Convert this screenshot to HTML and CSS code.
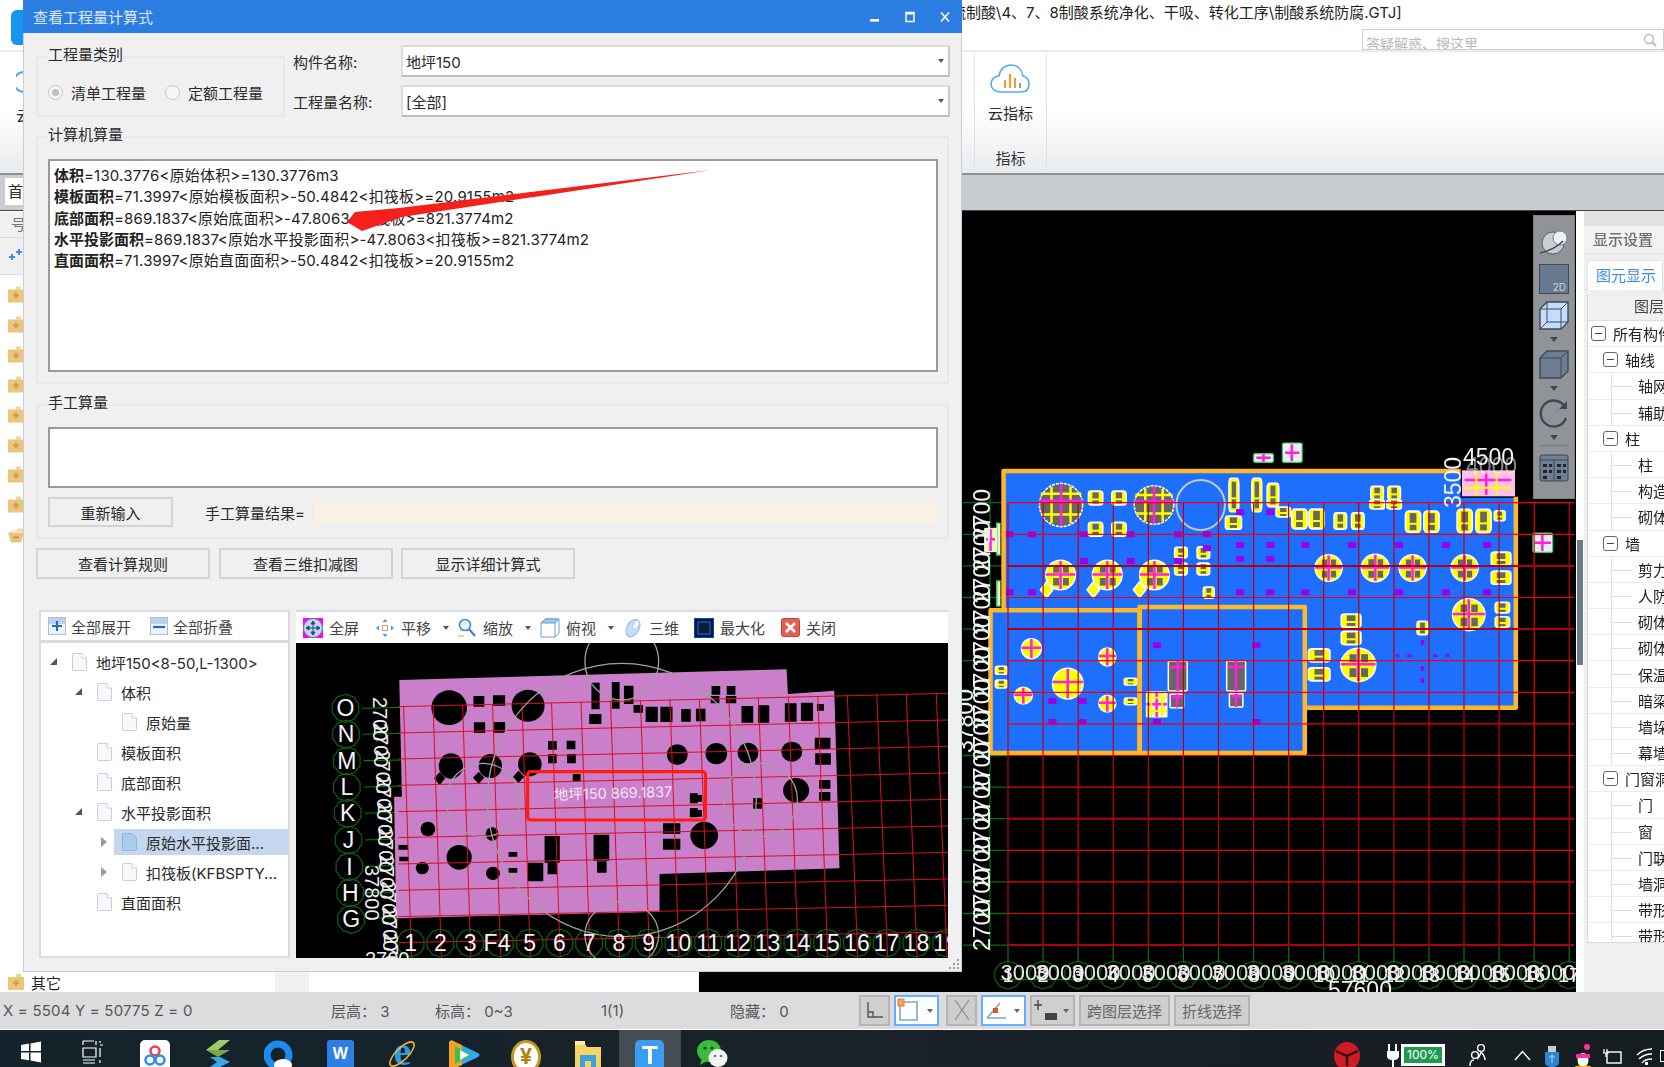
FILE: index.html
```html
<!DOCTYPE html>
<html lang="zh-CN">
<head>
<meta charset="utf-8">
<title>查看工程量计算式</title>
<link rel="stylesheet" href="styles.css">
</head>
<body>
<div class="app">
  <div class="topbar">
    <div class="app-logo"></div>
    <div class="doc-title">硫制酸\4、7、8制酸系统净化、干吸、转化工序\制酸系统防腐.GTJ]</div>
    <div class="search"><span>答疑解惑、搜这里</span>
      <svg class="search-ic" width="14" height="14" viewBox="0 0 14 14"><circle cx="6" cy="6" r="4.5" fill="none" stroke="#bbb" stroke-width="1.5"/><path d="M9.5 9.5L13 13" stroke="#bbb" stroke-width="2"/></svg>
    </div>
  </div>
  <div class="ribbon">
    <div class="rib-left"><svg width="8" height="22" viewBox="0 0 8 22"><path d="M8 1A10 10 0 0 0 8 21" fill="none" stroke="#58a6ee" stroke-width="2"/></svg><span class="rib-frag">云</span></div>
    <div class="rib-group">
      <div class="rib-tool">
        <svg width="40" height="30" viewBox="0 0 40 30"><path d="M11 28C4 28 1 24 1 20c0-5 4-8 8-8C10 5 15 1 21 1c7 0 11 5 12 11 4 1 6 4 6 8 0 5-3 8-8 8z" fill="#fff" stroke="#5aa8ee" stroke-width="1.6"/><path d="M15 24v-8M20 24V10M25 24v-10" stroke="#f79a3a" stroke-width="2.2"/><path d="M30 24v-5" stroke="#5aa8ee" stroke-width="2"/></svg>
        <span>云指标</span>
      </div>
      <div class="rib-name">指标</div>
    </div>
  </div>
  <div class="band"><div class="first-tab">首</div></div>
  <div class="main">
    <div class="nav">
      <div class="nav-head">号</div>
      <div class="nav-tools"><svg width="16" height="14" viewBox="0 0 16 14"><path d="M2 8h2V6h2v2h2v2H6v2H4v-2H2z" fill="#3f8fe0"/><path d="M9 3h2V1h2v2h2v2h-2v2h-2V5H9z" fill="#3f8fe0"/></svg></div>
      <div class="nav-list">
        <svg class="fold" width="17" height="17" viewBox="0 0 17 17"><use href="#folder"/></svg>
        <svg class="fold" width="17" height="17" viewBox="0 0 17 17"><use href="#folder"/></svg>
        <svg class="fold" width="17" height="17" viewBox="0 0 17 17"><use href="#folder"/></svg>
        <svg class="fold" width="17" height="17" viewBox="0 0 17 17"><use href="#folder"/></svg>
        <svg class="fold" width="17" height="17" viewBox="0 0 17 17"><use href="#folder"/></svg>
        <svg class="fold" width="17" height="17" viewBox="0 0 17 17"><use href="#folder"/></svg>
        <svg class="fold" width="17" height="17" viewBox="0 0 17 17"><use href="#folder"/></svg>
        <svg class="fold" width="17" height="17" viewBox="0 0 17 17"><use href="#folder"/></svg>
        <svg class="fold" width="17" height="17" viewBox="0 0 17 17"><path d="M3 4h6l1-2h5v3H3z" fill="#f1d39a"/><path d="M0 6h16l-3 10H3z" fill="#ecc47a"/><path d="M5 10h6v1.6H5z" fill="#b9924f"/></svg>
        <div class="nav-last"><svg width="17" height="17" viewBox="0 0 17 17"><use href="#folder"/></svg><span>其它</span></div>
      </div>
    </div>
    <div class="mid"><div class="mid-strip"></div><div class="mid-page"></div></div>
    <div class="canvas">
      <svg class="cad" width="877" height="782" viewBox="699 210 877 782">
        <defs class="ns">
          <g id="folder"><path d="M8 0h5v3H8z" fill="#f1d39a"/><path d="M0 3h16v13H0z" fill="#ecc47a"/><path d="M7 6h2v2h2v2H9v2H7v-2H5V8h2z" fill="#c59f56"/></g>
          <polygon id="dec" points="0,-14 8.2,-11.3 13.3,-4.3 13.3,4.3 8.2,11.3 0,14 -8.2,11.3 -13.3,4.3 -13.3,-4.3 -8.2,-11.3"/>
          <text id="d27" class="dim27" transform="rotate(-90)">2700</text>
          <text id="d27r" class="dim27m" transform="rotate(90)">2700</text>
          <text id="d30" class="dim30" text-anchor="middle">3000</text>
          <g id="cg"><ellipse rx="50" ry="50" class="c-grey"/><path d="M-22-42V42M22-42V42M-45 22H45M-47-26H47" class="y-line"/><path d="M0-48V48M-50-10H50" class="m-line"/></g>
          <g id="cy"><ellipse rx="50" ry="50" class="c-yel"/><path d="M-25-32h20v24h-20zM8-32h20v24H8zM-25 10h20v26h-20zM8 10h20v26H8z" class="grey-f"/><path d="M0-48V48M-50 -2H50" class="m-line"/></g>
          <g id="cs"><ellipse rx="50" ry="50" class="c-yel"/><path d="M0-48V48M-50-5H50" class="m-line"/></g>
          <g id="rr"><rect x="-50" y="-50" width="100" height="100" rx="20" class="c-yel"/><rect x="-22" y="-40" width="44" height="80" class="grey-f"/><path d="M-45 10H45" class="y-thin"/></g>
          <g id="tt"><rect x="-50" y="-50" width="100" height="100" rx="5" class="c-tall"/><path d="M0-50V50M-45-30H45" class="m-line"/></g>
          <path id="dia" d="M0-24L14 0 0 24-14 0z" class="c-yel"/>
        </defs>
        <rect x="699" y="210" width="877" height="782" class="black"/>
        <path d="M990 490V950" class="gdim"/>
        <path d="M963 501.7H1008M963 533.3H1008M963 564.9H1008M963 596.5H1008M963 628.1H1008M963 659.7H1008M963 691.3H1008M963 722.9H1008M963 754.5H1008M963 786.1H1008M963 817.7H1008M963 849.3H1008M963 880.9H1008M963 912.5H1008M963 944.1H1008" class="gdim"/>
        <path d="M1008 944V962M1043.1 944V962M1078.2 944V962M1113.2 944V962M1148.3 944V962M1183.4 944V962M1218.5 944V962M1253.6 944V962M1288.6 944V962M1323.7 944V962M1358.8 944V962M1393.9 944V962M1429 944V962M1464 944V962M1499.1 944V962M1534.2 944V962M1569.3 944V962M1000 978.5H1576" class="gdim"/>
        <g transform="translate(960,430) scale(.449,.3333)" class="ns">
          <path d="M97 540V120H1115V200H1238V830H770V530H400V540Z" class="blue"/>
          <rect x="68" y="538" width="332" height="428" class="blue"/>
          <rect x="400" y="528" width="368" height="438" class="blue"/>
          <rect x="1118" y="118" width="118" height="78" class="pink"/>
          <path d="M1124 147H1228M1172 122V192" class="m-line"/><path d="M1124 170H1228M1150 122V192M1195 122V192" class="y-thin"/>
          <use href="#cg" transform="translate(225,222) scale(.96,1.3)"/>
          <use href="#cg" transform="translate(432,222) scale(.88,1.16)"/>
          <ellipse cx="536" cy="222" rx="54" ry="75" class="ring"/>
          <use href="#cy" transform="translate(224,432) scale(.66,.88)"/><use href="#cy" transform="translate(328,432) scale(.66,.88)"/><use href="#cy" transform="translate(433,432) scale(.66,.88)"/>
          <use href="#cy" transform="translate(821,411) scale(.6,.8)"/><use href="#cy" transform="translate(925,411) scale(.62,.82)"/><use href="#cy" transform="translate(1008,411) scale(.6,.8)"/><use href="#cy" transform="translate(1124,411) scale(.6,.8)"/>
          <use href="#cy" transform="translate(1133,551) scale(.72,.96)"/><use href="#cy" transform="translate(887,702) scale(.78,1)"/>
          <use href="#cs" transform="translate(159,653) scale(.44,.6)"/><use href="#cs" transform="translate(328,678) scale(.38,.54)"/><use href="#cs" transform="translate(240,758) scale(.68,.92)"/><use href="#cs" transform="translate(141,794) scale(.4,.5)"/><use href="#cs" transform="translate(328,818) scale(.38,.5)"/>
          <use href="#rr" transform="translate(302,201) scale(.32,.42)"/><use href="#rr" transform="translate(354,201) scale(.32,.42)"/><use href="#rr" transform="translate(302,295) scale(.32,.42)"/><use href="#rr" transform="translate(354,295) scale(.32,.42)"/>
          <use href="#rr" transform="translate(610,192) scale(.22,1)"/><use href="#rr" transform="translate(661,192) scale(.22,1)"/><use href="#rr" transform="translate(697,192) scale(.26,.7)"/><use href="#rr" transform="translate(609,275) scale(.36,.4)"/><use href="#rr" transform="translate(720,243) scale(.32,.3)"/>
          <use href="#rr" transform="translate(756,264) scale(.34,.6)"/><use href="#rr" transform="translate(794,264) scale(.34,.6)"/><use href="#rr" transform="translate(847,270) scale(.28,.5)"/><use href="#rr" transform="translate(886,270) scale(.28,.5)"/>
          <use href="#rr" transform="translate(1009,272) scale(.34,.64)"/><use href="#rr" transform="translate(1050,272) scale(.34,.64)"/><use href="#rr" transform="translate(1124,270) scale(.34,.7)"/><use href="#rr" transform="translate(1166,270) scale(.34,.7)"/><use href="#rr" transform="translate(1202,254) scale(.24,.3)"/>
          <use href="#rr" transform="translate(929,186) scale(.28,.4)"/><use href="#rr" transform="translate(967,186) scale(.28,.4)"/><use href="#rr" transform="translate(929,220) scale(.32,.28)"/><use href="#rr" transform="translate(967,220) scale(.32,.28)"/>
          <use href="#rr" transform="translate(492,365) scale(.28,.32)"/><use href="#rr" transform="translate(542,365) scale(.28,.36)"/><use href="#rr" transform="translate(492,414) scale(.28,.36)"/><use href="#rr" transform="translate(542,414) scale(.28,.36)"/><use href="#rr" transform="translate(554,485) scale(.24,.34)"/>
          <use href="#rr" transform="translate(1205,383) scale(.44,.4)"/><use href="#rr" transform="translate(1205,440) scale(.44,.4)"/><use href="#rr" transform="translate(1208,530) scale(.32,.32)"/><use href="#rr" transform="translate(1208,573) scale(.32,.32)"/>
          <use href="#rr" transform="translate(871,569) scale(.44,.4)"/><use href="#rr" transform="translate(871,621) scale(.44,.4)"/><use href="#rr" transform="translate(800,673) scale(.48,.4)"/><use href="#rr" transform="translate(800,730) scale(.48,.4)"/><use href="#rr" transform="translate(1030,591) scale(.24,.4)"/>
          <use href="#rr" transform="translate(92,718) scale(.26,.24)"/><use href="#rr" transform="translate(92,759) scale(.26,.24)"/><use href="#rr" transform="translate(380,752) scale(.28,.2)"/><use href="#rr" transform="translate(380,811) scale(.28,.2)"/>
          <use href="#dia" transform="translate(193,476)"/><use href="#dia" transform="translate(297,476)"/><use href="#dia" transform="translate(400,476)"/>
          <use href="#tt" transform="translate(485,735) scale(.42,.9)"/><use href="#tt" transform="translate(615,735) scale(.42,.9)"/><use href="#tt" transform="translate(483,810) scale(.3,.4)"/><use href="#tt" transform="translate(615,808) scale(.3,.4)"/>
          <rect x="415" y="782" width="46" height="76" class="tile"/><path d="M415 820H461M438 782V858" class="m-line"/><path d="M415 800H461M415 840H461M426 782V858M450 782V858" class="y-thin"/>
          <path d="M101 301h18v18h-18zM151 301h18v18h-18zM266 301h18v18h-18zM371 301h18v18h-18zM477 301h18v18h-18zM541 301h18v18h-18zM615 333h18v18h-18zM682 333h18v18h-18zM760 333h18v18h-18zM864 333h18v18h-18zM969 333h18v18h-18zM1073 333h18v18h-18zM1165 333h18v18h-18zM541 343h18v18h-18zM615 374h18v18h-18zM682 374h18v18h-18zM267 381h18v18h-18zM371 381h18v18h-18zM477 381h18v18h-18zM101 475h18v18h-18zM151 475h18v18h-18zM615 475h18v18h-18zM682 475h18v18h-18zM760 475h18v18h-18zM864 475h18v18h-18zM969 475h18v18h-18zM1073 475h18v18h-18zM1165 475h18v18h-18zM615 234h18v18h-18zM682 234h18v18h-18zM430 634h18v18h-18zM651 634h18v18h-18zM197 801h18v18h-18zM264 801h18v18h-18zM197 864h18v18h-18zM264 864h18v18h-18zM430 864h18v18h-18zM651 864h18v18h-18zM970 670h9v9h-9zM996 670h9v9h-9zM1054 670h9v9h-9zM1081 670h9v9h-9zM1026 627h8v14h-8zM1026 705h8v14h-8zM1026 741h8v14h-8z" class="purple"/>
          <path d="M97 540V120H1115M1238 197V830H770" class="orange"/>
          <rect x="68" y="538" width="332" height="428" class="orange"/>
          <rect x="400" y="528" width="368" height="438" class="orange"/>
          <rect x="654" y="68" width="44" height="26" rx="4" class="item"/><path d="M660 80H692M676 70V92" class="m-line"/>
          <rect x="718" y="36" width="44" height="58" rx="4" class="item"/><path d="M724 65H756M739 40V90" class="m-line"/>
          <rect x="1276" y="306" width="44" height="58" rx="4" class="item"/><path d="M1280 335H1316M1297 310V360" class="m-line"/>
          <path d="M90 277H82V372H90M90 450H82V525H90" class="gbr"/>
          <rect x="55" y="292" width="26" height="70" class="tile"/><path d="M58 325H78M68 295V360" class="m-line"/>
        </g>
        <path d="M1008 501.7V944M1043.1 501.7V944M1078.2 501.7V944M1113.2 501.7V944M1148.3 501.7V944M1183.4 501.7V944M1218.5 501.7V944M1253.6 501.7V944M1288.6 501.7V944M1323.7 501.7V944M1358.8 501.7V944M1393.9 501.7V944M1429 501.7V944M1464 501.7V944M1499.1 501.7V944M1569.3 501.7V944" class="grid-v"/>
        <path d="M1534.2 501.7V944" class="grid-h"/>
        <path d="M1008 501.7H1574M1008 533.3H1574M1008 596.5H1574M1008 659.7H1574M1008 691.3H1574M1008 722.9H1574M1008 754.5H1574M1008 786.1H1574M1008 849.3H1574M1008 880.9H1574M1008 912.5H1574" class="grid-h"/>
        <path d="M1008 564.9H1574M1008 628.1H1574M1008 817.7H1574M1008 944.1H1574" class="grid-d"/>
        <g class="green-dec">
          <use href="#dec" x="1008" y="974"/><use href="#dec" x="1043.1" y="974"/><use href="#dec" x="1078.2" y="974"/><use href="#dec" x="1113.2" y="974"/><use href="#dec" x="1148.3" y="974"/><use href="#dec" x="1183.4" y="974"/><use href="#dec" x="1218.5" y="974"/><use href="#dec" x="1253.6" y="974"/><use href="#dec" x="1288.6" y="974"/><use href="#dec" x="1323.7" y="974"/><use href="#dec" x="1358.8" y="974"/><use href="#dec" x="1393.9" y="974"/><use href="#dec" x="1429" y="974"/><use href="#dec" x="1464" y="974"/><use href="#dec" x="1499.1" y="974"/><use href="#dec" x="1534.2" y="974"/><use href="#dec" x="1569.3" y="974"/>
        </g>
        <use href="#d30" x="1025" y="979"/><use href="#d30" x="1060" y="979"/><use href="#d30" x="1096" y="979"/><use href="#d30" x="1131" y="979"/><use href="#d30" x="1166" y="979"/><use href="#d30" x="1201" y="979"/><use href="#d30" x="1236" y="979"/><use href="#d30" x="1271" y="979"/><use href="#d30" x="1306" y="979"/><use href="#d30" x="1341" y="979"/><use href="#d30" x="1376" y="979"/><use href="#d30" x="1411" y="979"/><use href="#d30" x="1446" y="979"/><use href="#d30" x="1481" y="979"/><use href="#d30" x="1516" y="979"/><use href="#d30" x="1551" y="979"/>
        <g class="axis-b"><text x="1008" y="981">1</text><text x="1043" y="981">2</text><text x="1078" y="981">3</text><text x="1113" y="981">4</text><text x="1148" y="981">5</text><text x="1183" y="981">6</text><text x="1218" y="981">7</text><text x="1254" y="981">8</text><text x="1289" y="981">9</text><text x="1324" y="981">10</text><text x="1359" y="981">11</text><text x="1394" y="981">12</text><text x="1429" y="981">13</text><text x="1464" y="981">14</text><text x="1499" y="981">15</text><text x="1534" y="981">16</text><text x="1569" y="981">17</text></g>
        <use href="#d27" transform="translate(990,950)"/><use href="#d27" transform="translate(990,918.4)"/><use href="#d27" transform="translate(990,886.8)"/><use href="#d27" transform="translate(990,855.2)"/><use href="#d27" transform="translate(990,823.6)"/><use href="#d27" transform="translate(990,792)"/><use href="#d27" transform="translate(990,760.4)"/><use href="#d27" transform="translate(990,728.8)"/><use href="#d27" transform="translate(990,697.2)"/><use href="#d27" transform="translate(990,665.6)"/><use href="#d27" transform="translate(990,634)"/><use href="#d27" transform="translate(990,602.4)"/><use href="#d27" transform="translate(990,570.8)"/><use href="#d27" transform="translate(990,539.2)"/>
        <text class="dim27" transform="translate(973,752) rotate(-90)">37800</text>
        <text class="dim27" x="1328" y="997">57600</text>
        <text class="dim27" x="1463" y="464">4500</text>
        <text class="dim27 faint" x="1466" y="473">4000</text>
        <text class="dim27" transform="translate(1461,507) rotate(-90)">3500</text>
      </svg>
      <div class="nav3d">
        <svg width="30" height="26" viewBox="0 0 30 26"><ellipse cx="14" cy="14" rx="11" ry="11" fill="#c8ced4" stroke="#57606a"/><ellipse cx="21" cy="9" rx="7" ry="7" fill="#eef1f4" stroke="#7c848c"/><path d="M1 24C8 23 18 18 24 12" stroke="#3e4650" stroke-width="1.5" fill="none"/></svg>
        <div class="b2d">2D</div>
        <svg class="cube" width="30" height="29" viewBox="0 0 30 29"><path d="M1 8L8 1H29V21L22 28H1z" fill="#c4ddff" stroke="#3d4955" stroke-width="1.4"/><path d="M8 1V21H29M8 21L1 28M1 8H22V28M22 8L29 1" fill="none" stroke="#3d4955" stroke-width="1"/></svg>
        <span class="car"></span>
        <svg class="cube" width="30" height="29" viewBox="0 0 30 29"><path d="M1 8L8 1H29V21L22 28H1z" fill="#6e7e92" stroke="#3d4955" stroke-width="1.4"/><path d="M1 8H22V28M22 8L29 1" fill="none" stroke="#3d4955" stroke-width="1"/></svg>
        <span class="car"></span>
        <svg class="cube" width="30" height="29" viewBox="0 0 30 29"><path d="M26 8A13 13 0 1 0 27 19" fill="none" stroke="#3d4955" stroke-width="2.4"/><path d="M28 2V10H20z" fill="#3d4955"/></svg>
        <span class="car"></span>
        <div class="nav3d-sep"></div>
        <svg width="30" height="30" viewBox="0 0 30 30"><rect x="1" y="3" width="28" height="26" rx="2" fill="#6f7e90" stroke="#3d4955"/><path d="M1 8H29M15 8V29" stroke="#3d4955"/><path d="M4 12h4v3H4zM4 18h4v3H4zM4 24h4v3H4zM10 12h3v3h-3zM10 18h3v3h-3zM18 12h4v3h-4zM18 18h4v3h-4zM18 24h4v3h-4zM24 12h3v3h-3zM24 18h3v3h-3z" fill="#1d2530"/></svg>
      </div>
    </div>
    <div class="gutter"><div class="split"></div></div>
    <aside class="props">
      <div class="props-top"></div>
      <div class="props-title">显示设置</div>
      <div class="props-tabs"><div class="props-tab">图元显示</div></div>
      <div class="tbl">
        <div class="tbl-head">图层</div>
        <div class="lr l1"><i class="mn"></i>所有构件</div>
        <div class="lr l2"><i class="mn"></i>轴线</div>
        <div class="lr l3">轴网</div>
        <div class="lr l3">辅助轴线</div>
        <div class="lr l2"><i class="mn"></i>柱</div>
        <div class="lr l3">柱</div>
        <div class="lr l3">构造柱</div>
        <div class="lr l3">砌体柱</div>
        <div class="lr l2"><i class="mn"></i>墙</div>
        <div class="lr l3">剪力墙</div>
        <div class="lr l3">人防门框墙</div>
        <div class="lr l3">砌体墙</div>
        <div class="lr l3">砌体加筋</div>
        <div class="lr l3">保温层</div>
        <div class="lr l3">暗梁</div>
        <div class="lr l3">墙垛</div>
        <div class="lr l3">幕墙</div>
        <div class="lr l2"><i class="mn"></i>门窗洞</div>
        <div class="lr l3">门</div>
        <div class="lr l3">窗</div>
        <div class="lr l3">门联窗</div>
        <div class="lr l3">墙洞</div>
        <div class="lr l3">带形窗</div>
        <div class="lr l3">带形洞</div>
      </div>
    </aside>
  </div>
  <footer class="status">
    <span class="st-xyz">X = 5504 Y = 50775 Z = 0</span>
    <span class="st-a">层高：&nbsp;3</span>
    <span class="st-b">标高：&nbsp;0~3</span>
    <span class="st-c">1(1)</span>
    <span class="st-d">隐藏：&nbsp;0</span>
    <div class="st-tools">
      <div class="sb s1"><svg width="20" height="20" viewBox="0 0 20 20"><path d="M3 2V17H18M3 12H8V17" fill="none" stroke="#555" stroke-width="1.4"/></svg></div>
      <div class="sb on s2"><svg width="24" height="24" viewBox="0 0 24 24"><path d="M3 4H20V22H3z" fill="none" stroke="#7ba6cf" stroke-width="1.6"/><rect x="1" y="1" width="6" height="7" fill="#f7a35c" stroke="#e07b2c"/></svg><i class="sc"></i></div>
      <div class="sb dis s3"><svg width="20" height="24" viewBox="0 0 20 24"><path d="M3 2L17 22M17 2L3 22" stroke="#8b8b8b" stroke-width="1.2"/></svg></div>
      <div class="sb on s2"><svg width="24" height="24" viewBox="0 0 24 24"><path d="M3 20H22M3 20L16 5" fill="none" stroke="#7ba6cf" stroke-width="1.6"/><rect x="9" y="10" width="5" height="5" fill="#e8541e"/></svg><i class="sc"></i></div>
      <div class="sb s2"><svg width="24" height="24" viewBox="0 0 24 24"><path d="M5 2V12M1 7H9" stroke="#444" stroke-width="1.4"/><rect x="12" y="15" width="12" height="7" fill="#444"/></svg><i class="sc"></i></div>
      <div class="sb s6">跨图层选择</div>
      <div class="sb s7">折线选择</div>
    </div>
  </footer>
  <div class="taskbar">
    <div class="tslot"><svg width="22" height="24" viewBox="0 0 22 24"><path d="M1 5L9 3.6V11H1zM10.5 3.4L21 1.6V11H10.5zM1 12.5H9v7.8L1 19zM10.5 12.5H21v10L10.5 20.6z" fill="#fff"/></svg></div>
    <div class="tslot"><svg width="22" height="24" viewBox="0 0 22 24"><path d="M1 1V5M1 1H12M14 1V5M18 5H21M18 1V3M1 8H14V17H1zM18 8V17M1 20H13M18 20V23M1 23H13" fill="none" stroke="#fff" stroke-width="1.2"/></svg></div>
    <div class="tslot"><svg width="30" height="27" viewBox="0 0 30 27"><rect width="30" height="34" rx="5" fill="#fff"/><circle cx="15" cy="11" r="4.5" fill="none" stroke="#e6434d" stroke-width="2.6"/><circle cx="10" cy="20" r="4.5" fill="none" stroke="#2b8ff0" stroke-width="2.6"/><circle cx="20" cy="20" r="4.5" fill="none" stroke="#2b8ff0" stroke-width="2.6"/></svg></div>
    <div class="tslot"><svg width="26" height="27" viewBox="0 0 26 27"><path d="M2 10L15 0H26L14 10z" fill="#9fca6b"/><path d="M2 10L14 10 26 10 14 17z" fill="#79a84c"/><path d="M6 17H16L26 22 16 27H6L13 22z" fill="#36a8e8"/></svg></div>
    <div class="tslot"><svg width="30" height="27" viewBox="0 0 30 27"><circle cx="14" cy="15" r="11" fill="none" stroke="#1d8cf0" stroke-width="7"/><ellipse cx="19" cy="25" rx="9" ry="6" fill="#fff"/></svg></div>
    <div class="tslot"><div class="t-wps">W</div></div>
    <div class="tslot t-ie"><span>e</span><svg class="t-orbit" width="28" height="27" viewBox="0 0 28 27"><ellipse cx="14" cy="14" rx="16" ry="6" transform="rotate(-45 14 14)" fill="none" stroke="#e9b93a" stroke-width="1.6"/></svg></div>
    <div class="tslot"><svg width="32" height="27" viewBox="0 0 32 27"><path d="M1 3C1 1 3 0 5 1L30 13C32 14 32 16 30 17L5 29C3 30 1 29 1 27z" fill="#34a8f2"/><path d="M1 3C1 1 3 0 5 1L14 5V25L5 29C3 30 1 29 1 27z" fill="#f6a21c"/><path d="M7 6L24 15 7 24z" fill="#3cc04a"/><path d="M12 10L21 15 12 20z" fill="#fff"/></svg></div>
    <div class="tslot"><div class="t-coin">¥</div></div>
    <div class="tslot"><svg width="28" height="27" viewBox="0 0 28 27"><path d="M1 4H11L13 7H27V27H1z" fill="#f6d365"/><path d="M1 1H11V5H1z" fill="#fdeaa8"/><rect x="6" y="15" width="16" height="12" fill="#3f9fe0"/><rect x="11" y="21" width="6" height="6" fill="#f6d365"/></svg></div>
    <div class="tslot sel"><div class="t-t">T</div></div>
    <div class="tslot"><svg width="32" height="27" viewBox="0 0 32 27"><ellipse cx="13" cy="11" rx="12" ry="11" fill="#3dbb3f"/><path d="M6 18L4 25 11 21z" fill="#3dbb3f"/><circle cx="9" cy="8" r="1.6" fill="#174a18"/><circle cx="16" cy="8" r="1.6" fill="#174a18"/><ellipse cx="22" cy="18" rx="9.5" ry="9" fill="#f4f4f4"/><circle cx="19" cy="16" r="1.3" fill="#777"/><circle cx="25" cy="16" r="1.3" fill="#777"/></svg></div>
    <div class="tray">
      <svg class="tr-lenovo" width="26" height="25" viewBox="0 0 26 25"><ellipse cx="13" cy="14" rx="13" ry="14" fill="#cf1b26"/><path d="M2 9L13 14 24 9M13 14V24" fill="none" stroke="#30060a" stroke-width="2.4"/></svg>
      <svg class="tr-plug" width="14" height="23" viewBox="0 0 14 23"><path d="M3 0V7M10 0V7" stroke="#fff" stroke-width="2"/><path d="M1 7H13V12C13 15 10 16 8 16V23H6V16C4 16 1 15 1 12z" fill="#fff"/></svg>
      <div class="tr-bat"><span>100%</span></div>
      <svg class="tr-person" width="18" height="24" viewBox="0 0 18 24"><circle cx="12" cy="5" r="3.4" fill="none" stroke="#fff" stroke-width="1.4"/><circle cx="6" cy="12" r="3.4" fill="none" stroke="#fff" stroke-width="1.4"/><path d="M1 23C1 19 3 17 5 17M8 16C10 15 11 12 12 9M12 9C14 11 16 13 16 17" fill="none" stroke="#fff" stroke-width="1.4"/></svg>
      <svg class="tr-chev" width="17" height="11" viewBox="0 0 17 11"><path d="M1 10L8.5 1.5 16 10" fill="none" stroke="#fff" stroke-width="1.4"/></svg>
      <svg class="tr-usb" width="16" height="21" viewBox="0 0 16 21"><rect x="4" y="0" width="8" height="6" fill="#c9cdd0"/><path d="M1 6H15V17C15 19 12 21 8 21S1 19 1 17z" fill="#2b86d8"/><path d="M8 9V17M5 12L8 9 11 12" stroke="#bde0ff" fill="none"/></svg>
      <svg class="tr-qq" width="18" height="24" viewBox="0 0 18 24"><ellipse cx="9" cy="13" rx="8" ry="11" fill="#1a1a1a"/><ellipse cx="9" cy="16" rx="5.5" ry="7" fill="#fff"/><rect x="2" y="10" width="14" height="4" fill="#ff2fa0"/><circle cx="13" cy="3" r="3" fill="#ff2fa0"/><ellipse cx="5" cy="23" rx="4" ry="1.5" fill="#f7b500"/><ellipse cx="13" cy="23" rx="4" ry="1.5" fill="#f7b500"/></svg>
      <svg class="tr-small" width="20" height="16" viewBox="0 0 20 16"><rect x="5" y="4" width="14" height="11" fill="none" stroke="#fff" stroke-width="1.4"/><path d="M1 5H7M2 1V5M5 1V5M4 5V9" stroke="#fff" stroke-width="1.2"/></svg>
      <svg class="tr-wifi" width="16" height="18" viewBox="0 0 16 18"><path d="M1 7C5 3 11 1 16 1M3 11C6 8 11 6 16 6M6 15C8 12 12 11 16 11" fill="none" stroke="#fff" stroke-width="1.3"/><rect x="9" y="14" width="3" height="3" fill="#fff"/></svg>
      <div class="tr-end"></div>
    </div>
  </div>
</div>

<section class="dlg">
  <header class="dlg-title"><span>查看工程量计算式</span>
    <div class="dlg-ctl">
      <svg width="12" height="12" viewBox="0 0 12 12"><rect x="1" y="8" width="9" height="2.6" fill="#fff"/></svg>
      <svg width="12" height="12" viewBox="0 0 12 12"><path d="M2 1.5H10V10.5H2z" fill="none" stroke="#fff" stroke-width="1.5"/><path d="M2 2.5H10" stroke="#fff" stroke-width="2"/></svg>
      <svg width="12" height="12" viewBox="0 0 12 12"><path d="M2 1.5L10 10.5M10 1.5L2 10.5" stroke="#fff" stroke-width="1.6"/></svg>
    </div>
  </header>
  <div class="dlg-body">
    <div class="top-row">
      <fieldset class="grp grp-type">
        <legend>工程量类别</legend>
        <div class="radios">
          <span class="radio on"></span><span class="rad-lab">清单工程量</span>
          <span class="radio"></span><span class="rad-lab">定额工程量</span>
        </div>
      </fieldset>
      <div class="combos">
        <div class="fld"><label>构件名称:</label><div class="combo">地坪150<i class="caret"></i></div></div>
        <div class="fld"><label>工程量名称:</label><div class="combo">[全部]<i class="caret"></i></div></div>
      </div>
    </div>
    <fieldset class="grp grp-calc">
      <legend>计算机算量</legend>
      <div class="formula">
        <p><b>体积</b>=130.3776&lt;原始体积&gt;=130.3776m3</p>
        <p><b>模板面积</b>=71.3997&lt;原始模板面积&gt;-50.4842&lt;扣筏板&gt;=20.9155m2</p>
        <p><b>底部面积</b>=869.1837&lt;原始底面积&gt;-47.8063&lt;扣筏板&gt;=821.3774m2</p>
        <p><b>水平投影面积</b>=869.1837&lt;原始水平投影面积&gt;-47.8063&lt;扣筏板&gt;=821.3774m2</p>
        <p><b>直面面积</b>=71.3997&lt;原始直面面积&gt;-50.4842&lt;扣筏板&gt;=20.9155m2</p>
      </div>
    </fieldset>
    <fieldset class="grp grp-man">
      <legend>手工算量</legend>
      <div class="man-box"></div>
      <div class="man-row">
        <div class="btn btn-re">重新输入</div>
        <span class="man-lab">手工算量结果=</span>
        <div class="man-res"></div>
      </div>
    </fieldset>
    <div class="btn-row">
      <div class="btn btn-w">查看计算规则</div>
      <div class="btn btn-w">查看三维扣减图</div>
      <div class="btn btn-w">显示详细计算式</div>
    </div>
    <div class="view-row">
      <div class="tree-pane">
        <div class="pane-tools">
          <div class="pt"><svg width="18" height="18" viewBox="0 0 18 18"><rect x=".5" y=".5" width="17" height="17" fill="#eef3fb" stroke="#a8c0e4"/><rect x="1" y="1" width="16" height="6" fill="#bdd0ee"/><path d="M9 4V14M4 9H14" stroke="#1c6fc4" stroke-width="2.2"/></svg><span>全部展开</span></div>
          <div class="pt"><svg width="18" height="18" viewBox="0 0 18 18"><rect x=".5" y=".5" width="17" height="17" fill="#eef3fb" stroke="#a8c0e4"/><rect x="1" y="1" width="16" height="6" fill="#bdd0ee"/><path d="M3 10H15" stroke="#1c6fc4" stroke-width="2.2"/></svg><span>全部折叠</span></div>
        </div>
        <div class="tree">
          <div class="tr t0"><i class="arr down"></i><div class="node"><svg width="15" height="18" viewBox="0 0 15 18"><use href="#doc"/></svg>地坪150&lt;8-50,L-1300&gt;</div></div>
          <div class="tr t1"><i class="arr down"></i><div class="node"><svg width="15" height="18" viewBox="0 0 15 18"><use href="#doc"/></svg>体积</div></div>
          <div class="tr t2"><i class="arr"></i><div class="node"><svg width="15" height="18" viewBox="0 0 15 18"><use href="#doc"/></svg>原始量</div></div>
          <div class="tr t1"><i class="arr"></i><div class="node"><svg width="15" height="18" viewBox="0 0 15 18"><use href="#doc"/></svg>模板面积</div></div>
          <div class="tr t1"><i class="arr"></i><div class="node"><svg width="15" height="18" viewBox="0 0 15 18"><use href="#doc"/></svg>底部面积</div></div>
          <div class="tr t1"><i class="arr down"></i><div class="node"><svg width="15" height="18" viewBox="0 0 15 18"><use href="#doc"/></svg>水平投影面积</div></div>
          <div class="tr t2"><i class="arr right"></i><div class="node sel"><svg width="15" height="18" viewBox="0 0 15 18"><path d="M.5 1.5Q.5.5 1.5.5H10L14.5 5V16.5Q14.5 17.5 13.500 17.500H1.500Q.5 17.500 .5 16.500Z" fill="#a9cdf0" stroke="#8fb4da"/></svg>原始水平投影面...</div></div>
          <div class="tr t2"><i class="arr right"></i><div class="node"><svg width="15" height="18" viewBox="0 0 15 18"><use href="#doc"/></svg>扣筏板(KFBSPTY...</div></div>
          <div class="tr t1"><i class="arr"></i><div class="node"><svg width="15" height="18" viewBox="0 0 15 18"><use href="#doc"/></svg>直面面积</div></div>
        </div>
        <svg class="hidden-defs" width="0" height="0"><defs><g id="doc"><path d="M.5 1.5Q.5.5 1.500.5H10L14.500 5V16.500Q14.500 17.500 13.500 17.500H1.500Q.5 17.500 .5 16.500Z" fill="#f7f9fc" stroke="#c9d0d9"/><path d="M10 .5V5H14.500" fill="#fff" stroke="#c9d0d9"/></g></defs></svg>
      </div>
      <div class="view-pane">
        <div class="pane-tools view-tools">
          <div class="pt"><svg width="20" height="20" viewBox="0 0 20 20"><rect width="20" height="20" fill="#f0f"/><circle cx="10" cy="10" r="9.500" fill="#c6d3ea" stroke="#6b7d9c"/><path d="M10 3V17M3 10H17M10 3L8 6H12zM10 17L8 14H12zM3 10L6 8V12zM17 10L14 8V12z" stroke="#1d4a8a" fill="#1d4a8a"/></svg><span>全屏</span></div>
          <div class="pt"><svg width="20" height="20" viewBox="0 0 20 20"><rect x="7.500" y="7.500" width="5" height="5" fill="none" stroke="#e8984a"/><path d="M10 1L7.500 4H12.500zM10 19L7.500 16H12.500zM1 10L4 7.500V12.500zM19 10L16 7.500V12.500z" fill="#3f9fe6"/></svg><span>平移</span><i class="caret"></i></div>
          <div class="pt"><svg width="20" height="20" viewBox="0 0 20 20"><circle cx="8" cy="7" r="5.500" fill="#eaf3fc" stroke="#4a86c8" stroke-width="1.600"/><path d="M12 11L18 18" stroke="#4a7fb8" stroke-width="2.200"/><path d="M1 18H7" stroke="#e8984a"/></svg><span>缩放</span><i class="caret"></i></div>
          <div class="pt"><svg width="20" height="20" viewBox="0 0 20 20"><path d="M1 5L5 1H19V15L15 19H1z" fill="#fff" stroke="#6f9fd2"/><path d="M1 5H15L19 1H5zM15 5V19" fill="#9fc6ee" stroke="#6f9fd2"/></svg><span>俯视</span><i class="caret"></i></div>
          <div class="pt"><svg width="20" height="20" viewBox="0 0 20 20"><ellipse cx="10" cy="10" rx="6" ry="9.500" transform="rotate(30 10 10)" fill="#c5ddf5" stroke="#8fb9e2"/><ellipse cx="13" cy="7" rx="3" ry="5" transform="rotate(30 13 7)" fill="#eef6fd" stroke="#a7c9ea"/></svg><span>三维</span></div>
          <div class="pt"><svg width="20" height="20" viewBox="0 0 20 20"><rect x=".5" y=".5" width="19" height="19" fill="#0a1a3a" stroke="#0a3fc4"/><path d="M4 4H16V16H4z" fill="none" stroke="#1f6fd8"/></svg><span>最大化</span></div>
          <div class="pt"><svg width="19" height="19" viewBox="0 0 19 19"><rect x=".5" y=".5" width="18" height="18" rx="2" fill="#e66052" stroke="#a94b3e"/><path d="M5 5L14 14M14 5L5 14" stroke="#fff" stroke-width="2.600"/></svg><span>关闭</span></div>
        </div>
        <svg class="mini" width="652" height="315" viewBox="296 643 652 315">
          <rect x="296" y="643" width="652" height="315" class="black"/>
          <g transform="translate(290,600) scale(.4337,.3333)" class="ns">
            <path d="M165 325L270 322M168 403L265 400M170 482L262 480M170 561L262 558M172 640L262 637M172 720L262 716M174 800L262 796M176 878L262 876M178 955L270 953" class="gmini"/>
            <path d="M252 240L1145 208 1148 282 1255 272 1267 805 852 822 852 935 245 955 240 590 258 590Z" class="mauve"/>
            <ellipse cx="367" cy="323" rx="41" ry="52"/><ellipse cx="549" cy="317" rx="38" ry="48"/><ellipse cx="371" cy="498" rx="28" ry="38"/><ellipse cx="462" cy="498" rx="27" ry="36"/><ellipse cx="553" cy="493" rx="27" ry="36"/><ellipse cx="893" cy="464" rx="24" ry="31"/><ellipse cx="983" cy="461" rx="25" ry="32"/><ellipse cx="1056" cy="459" rx="24" ry="31"/><ellipse cx="1157" cy="455" rx="24" ry="30"/><ellipse cx="1167" cy="571" rx="30" ry="37"/><ellipse cx="318" cy="687" rx="17" ry="22"/><ellipse cx="466" cy="702" rx="15" ry="20"/><ellipse cx="390" cy="772" rx="29" ry="37"/><ellipse cx="305" cy="804" rx="15" ry="19"/><ellipse cx="468" cy="820" rx="16" ry="20"/><ellipse cx="955" cy="706" rx="32" ry="41"/>
            <path d="M345 517L358 535 345 555 332 535zM435 515L448 533 435 552 422 533zM527 512L540 530 527 549 514 530z"/>
            <path d="M423 288h25v32h-25zM468 286h28v31h-28zM424 367h26v32h-26zM470 366h26v32h-26zM695 248h19v80h-19zM742 246h18v80h-18zM770 257h22v55h-22zM792 315h22v23h-22zM690 342h28v30h-28zM820 320h28v46h-28zM854 320h28v46h-28zM902 327h22v38h-22zM936 326h22v38h-22zM972 258h20v26h-20zM1007 258h20v26h-20zM970 288h20v22h-20zM1005 288h24v22h-24zM1041 318h27v50h-27zM1079 316h26v52h-26zM1141 310h27v55h-27zM1178 308h28v55h-28zM1215 312h16v20h-16zM595 423h20v26h-20zM638 422h20v26h-20zM595 462h20v28h-20zM639 462h20v28h-20zM652 522h18v22h-18zM1210 413h36v34h-36zM1211 460h36v34h-36zM1220 540h26v26h-26zM1220 576h26v26h-26zM1068 594h20v32h-20zM922 580h18v30h-18zM940 585h10v20h-10zM922 624h18v28h-18zM940 630h10v20h-10zM860 670h40v32h-40zM860 716h40v33h-40zM587 708h35v80h-35zM594 788h22v35h-22zM548 788h36v56h-36zM700 704h36v78h-36zM708 784h22v34h-22zM250 735h22v14h-22zM252 770h22v14h-22zM504 756h20v14h-20zM504 804h20v14h-20z"/>
            <path d="M262 320L280 1072M330 318L349 1072M398 315L417 1072M467 313L486 1072M535 311L554 1072M603 308L623 1072M671 306L692 1072M739 304L760 1072M808 302L829 1072M876 299L897 1072M944 297L966 1072M1012 295L1035 1072M1080 292L1103 1072M1149 290L1172 1072M1217 288L1240 1072M1285 285L1309 1072M1353 283L1378 1072M1421 281L1446 1072M1490 279L1515 1072" class="rl"/>
            <path d="M250 320L1517 280M250 399L1517 360M250 477L1517 439M250 556L1517 519M250 635L1517 598M250 713L1517 678M250 792L1517 757M250 871L1517 837M250 950L1517 916M250 1028L1517 996" class="rl"/>
            <ellipse cx="765" cy="600" rx="310" ry="410" class="gring"/>
            <ellipse cx="765" cy="185" rx="85" ry="115" class="gring"/>
            <ellipse cx="765" cy="1005" rx="85" ry="100" class="gring"/>
            <ellipse cx="445" cy="600" rx="85" ry="110" class="gring"/>
            <ellipse cx="1085" cy="600" rx="85" ry="110" class="gring"/>
            <rect x="548" y="515" width="410" height="145" rx="8" class="redbox"/>
          </g>
          <g class="gmd">
            <use href="#dec" x="345.500" y="708.300"/><use href="#dec" x="346" y="734.300"/><use href="#dec" x="346.800" y="761"/><use href="#dec" x="346.800" y="787.300"/><use href="#dec" x="347.700" y="813.300"/><use href="#dec" x="348.500" y="840"/><use href="#dec" x="349.400" y="866.700"/><use href="#dec" x="350.300" y="892.700"/><use href="#dec" x="351.100" y="919.300"/>
            <use href="#dec" x="410.600" y="943"/><use href="#dec" x="440.400" y="943"/><use href="#dec" x="470.100" y="943"/><use href="#dec" x="499.900" y="943"/><use href="#dec" x="529.600" y="943"/><use href="#dec" x="559.400" y="943"/><use href="#dec" x="589.100" y="943"/><use href="#dec" x="618.900" y="943"/><use href="#dec" x="648.600" y="943"/><use href="#dec" x="678.400" y="943"/><use href="#dec" x="708.100" y="943"/><use href="#dec" x="737.900" y="943"/><use href="#dec" x="767.600" y="943"/><use href="#dec" x="797.400" y="943"/><use href="#dec" x="827.100" y="943"/><use href="#dec" x="856.900" y="943"/><use href="#dec" x="886.600" y="943"/><use href="#dec" x="916.400" y="943"/><use href="#dec" x="946.100" y="943"/>
          </g>
          <g class="axis-m">
            <text x="345.500" y="716">O</text><text x="346" y="742">N</text><text x="346.800" y="769">M</text><text x="346.800" y="795">L</text><text x="347.700" y="821">K</text><text x="348.500" y="848">J</text><text x="349.400" y="875">I</text><text x="350.300" y="901">H</text><text x="351.100" y="927">G</text>
            <text x="410.600" y="951">1</text><text x="440.400" y="951">2</text><text x="470.100" y="951">3</text><text x="497" y="951">F4</text><text x="529.600" y="951">5</text><text x="559.400" y="951">6</text><text x="589.100" y="951">7</text><text x="618.900" y="951">8</text><text x="648.600" y="951">9</text><text x="678.400" y="951">10</text><text x="708.100" y="951">11</text><text x="737.900" y="951">12</text><text x="767.600" y="951">13</text><text x="797.400" y="951">14</text><text x="827.100" y="951">15</text><text x="856.900" y="951">16</text><text x="886.600" y="951">17</text><text x="916.400" y="951">18</text><text x="946.100" y="951">19</text>
          </g>
          <use href="#d27r" transform="translate(373,697)"/><use href="#d27r" transform="translate(374,723)"/><use href="#d27r" transform="translate(375.500,749.500)"/><use href="#d27r" transform="translate(376.500,776)"/><use href="#d27r" transform="translate(378,802)"/><use href="#d27r" transform="translate(379,828)"/><use href="#d27r" transform="translate(380,855)"/><use href="#d27r" transform="translate(381.500,881)"/><use href="#d27r" transform="translate(382.500,907)"/><use href="#d27r" transform="translate(384,933)"/>
          <text class="dim27m" transform="translate(365,865) rotate(90)">37800</text>
          <text class="dim27m" x="365" y="966">2700</text>
          <text class="boxlab" transform="translate(554,800) rotate(-1.500)">地坪150 869.1837</text>
        </svg>
      </div>
    </div>
  </div>
  <svg class="grip" width="12" height="12" viewBox="0 0 12 12"><path d="M9 1h2v2H9zM5 5h2v2H5zM9 5h2v2H9zM1 9h2v2H1zM5 9h2v2H5zM9 9h2v2H9z" fill="#9aa0a6"/></svg>
  <svg class="pointer" width="380" height="70" viewBox="340 165 380 70"><path d="M710 170L398 208 354 212 346 222 361 231 401 217Z" fill="#f5201a"/></svg>
</section>
</body>
</html>
```
FILE: styles.css
```css
* { box-sizing: border-box; }
html, body { margin: 0; padding: 0; }
body {
  width: 1664px;
  height: 1067px;
  overflow: hidden;
  position: relative;
  font-family: "Inter", "Noto Sans CJK SC", sans-serif;
  font-size: 15px;
  color: #2a2a2a;
  background: #fff;
  filter: blur(.35px);
}
i { display: block; font-style: normal; }
p { margin: 0; }

.app { display: flex; flex-direction: column; width: 1664px; height: 1067px; }

.topbar { display: flex; height: 52px; flex: none; background: #fff; border-bottom: 2px solid #e9ebec; }
.app-logo { width: 30px; height: 35px; margin: 10px 0 0 11px; border-radius: 6px; background: #1596ee; flex: none; }
.doc-title { margin-left: 910px; width: 411px; line-height: 26px; white-space: nowrap; flex: none; color: #222; }
.search {
  margin: 29px 0 0 auto;
  width: 302px;
  height: 21px;
  flex: none;
  border: 1px solid #d0d0d0;
  display: flex;
  align-items: center;
  justify-content: space-between;
  padding: 0 6px 0 3px;
  overflow: hidden;
  color: #b9b9b9;
  font-size: 14px;
  line-height: 14px;
}
.search span { padding-top: 9px; }
.search-ic { flex: none; }

.ribbon { display: flex; height: 121px; flex: none; background: linear-gradient(#fff 45%, #e9ecee 100%); }
.rib-left { width: 974px; padding: 19px 0 0 16px; display: flex; flex-direction: column; flex: none; }
.rib-frag { margin-top: 11px; }
.rib-group {
  width: 73px;
  margin-top: 2px;
  margin-bottom: 3px;
  border-left: 1px solid #dfe2e4;
  border-right: 1px solid #dfe2e4;
  display: flex;
  flex-direction: column;
  align-items: center;
}
.rib-tool { display: flex; flex-direction: column; align-items: center; padding-top: 10px; gap: 8px; height: 93px; }
.rib-name { color: #333; line-height: 22px; margin-top: 3px; }

.band { height: 37px; flex: none; background: #c9ccd0; border-top: 2px solid #8d9196; display: flex; align-items: flex-end; padding: 0 0 5px 5px; }
.first-tab { width: 30px; height: 27px; background: #fff; padding-left: 3px; line-height: 27px; }

.main { flex: 1; display: flex; min-height: 0; border-top: 1px solid #404448; background: #f0f0f0; }
.nav { width: 275px; flex: none; display: flex; flex-direction: column; background: #fff; }
.nav-head { height: 26px; margin-top: 1px; background: #f0f0f0; padding-left: 11px; color: #777; line-height: 26px; border-bottom: 1px solid #ddd; flex: none; }
.nav-tools { height: 37px; background: #f0f0f0; flex: none; padding: 9px 0 0 7px; border-bottom: 1px solid #ddd; }
.nav-list { flex: 1; display: flex; flex-direction: column; padding: 5px 0 0 8px; }
.fold { height: 30px; flex: none; }
.nav-last { margin: auto 0 0; display: flex; align-items: center; gap: 6px; height: 20px; color: #222; }
.mid { width: 424px; flex: none; display: flex; margin-left: 5px; background: #fff; border-right: 6px solid #f0f0f0; }
.mid-strip { width: 29px; background: #f0f0f0; }
.mid-page { flex: 1; }
.canvas { width: 877px; height: 781px; flex: none; position: relative; overflow: hidden; margin-left: -5px; background: #000; }
.cad { display: block; }
.black { fill: #000; }
.ns * { vector-effect: non-scaling-stroke; }
.blue { fill: #1f6fff; }
.pink { fill: #ffbfe8; }
.orange { fill: none; stroke: #fdb72a; stroke-width: 4.5; stroke-linejoin: round; }
.c-grey { fill: #666; stroke: #fff; stroke-width: 1.5; stroke-dasharray: 3 1; }
.c-yel { fill: #ff0; stroke: #fff; stroke-width: 1.5; }
.c-tall { fill: #666; stroke: #fff; stroke-width: 1.5; }
.grey-f { fill: #666; }
.y-line { fill: none; stroke: #ff0; stroke-width: 2.5; }
.y-thin { fill: none; stroke: #ff0; stroke-width: 2; }
.m-line { fill: none; stroke: #ff1fe0; stroke-width: 2.5; }
.ring { fill: none; stroke: #c8c8c8; stroke-width: 2; }
.tile { fill: #f8f4b0; stroke: #fff; stroke-width: 1; }
.item { fill: #eee; stroke: #24d070; stroke-width: 1.2; }
.gbr { fill: #f2f2c0; stroke: #2ae070; stroke-width: 1.5; }
.purple { fill: #9a00f0; }
.grid-v { fill: none; stroke: #c00010; stroke-width: 1.2; }
.grid-h { fill: none; stroke: #f20008; stroke-width: 1.2; }
.grid-d { fill: none; stroke: #b00010; stroke-width: 2; }
.gdim { fill: none; stroke: #0b6a12; stroke-width: 1.3; }
.green-dec { fill: none; stroke: #0b6a12; stroke-width: 1.1; }
.dim27 { font-family: "Liberation Sans", sans-serif; font-size: 23px; fill: #f2f2f2; }
.faint { opacity: .55; }
.dim27m { font-family: "Liberation Sans", sans-serif; font-size: 20px; fill: #ececec; }
.dim30 { font-family: "Liberation Sans", sans-serif; font-size: 22px; fill: #e8e8e8; }
.axis-b { font-family: "Liberation Sans", sans-serif; font-size: 20px; fill: #f4f4f4; text-anchor: middle; }
.axis-m { font-family: "Liberation Sans", sans-serif; font-size: 23px; fill: #f4f4f4; text-anchor: middle; }
.gmd { fill: none; stroke: #0b6a12; stroke-width: 1.1; }
.gmini { fill: none; stroke: #0b7a12; stroke-width: 1.1; }
.mauve { fill: #c97fc9; }
.rl { fill: none; stroke: #d8101e; stroke-width: 1; }
.gring { fill: none; stroke: #a0a0a0; stroke-width: 1.3; }
.redbox { fill: none; stroke: #ff1c10; stroke-width: 3.2; }
.boxlab { font-size: 14.5px; fill: #f3e6f3; }

.nav3d {
  position: absolute;
  left: 834px;
  top: 4px;
  width: 42px;
  height: 284px;
  background: #909498;
  border: 1px solid #7e8286;
  display: flex;
  flex-direction: column;
  align-items: center;
  padding-top: 13px;
}
.nav3d > svg { flex: none; }
.b2d {
  width: 30px;
  height: 30px;
  margin-top: 9px;
  background: #66798f;
  border: 1px solid #3d4955;
  color: #cfd8e2;
  font-size: 10px;
  text-align: right;
  line-height: 10px;
  padding: 17px 2px 0 0;
  flex: none;
}
.nav3d .cube { margin-top: 7px; }
.car { width: 0; height: 0; margin-top: 7px; border: 4px solid transparent; border-top: 5px solid #40474e; border-bottom: 0; flex: none; }
.nav3d .cube + .car + .cube { margin-top: 8px; }
.nav3d-sep { width: 30px; height: 1px; background: #777; margin: 5px 0 6px; flex: none; }

.gutter { width: 8px; flex: none; background: #fff; display: flex; align-items: flex-start; margin-left: 0; }
.split { width: 6px; height: 125px; margin: 329px 0 0 1px; background: #6b7b87; }
.props { flex: 1; min-width: 0; display: flex; flex-direction: column; overflow: hidden; background: #f0f0f0; }
.props-top { height: 15px; flex: none; background: #e2e2e2; }
.props-title { height: 28px; flex: none; padding-left: 9px; color: #6d6d6d; font-weight: 500; line-height: 28px; white-space: nowrap; border-bottom: 1px solid #e0e0e0; background: #f2f2f2; }
.props-tabs { height: 36px; padding: 6px 0 0 3px; flex: none; border-bottom: 1px solid #d8d8d8; }
.props-tab { width: 76px; height: 30px; background: #fff; color: #3d8cf0; line-height: 29px; padding-left: 8px; border: 1px solid #e3e3e3; border-bottom: 0; white-space: nowrap; }
.tbl { margin: 4px 0 0 3px; width: 120px; height: 649px; flex: none; overflow: hidden; background: #fff; border-left: 1px solid #d8d8d8; border-bottom: 1px solid #d8d8d8; }
.tbl-head { height: 27px; background: #f0f0f0; padding-left: 46px; line-height: 26px; color: #444; border-bottom: 1px solid #ddd; white-space: nowrap; }
.lr { height: 26.2px; display: flex; align-items: center; white-space: nowrap; border-bottom: 1px solid #ececec; color: #222; }
.mn { width: 15px; height: 15px; border: 1px solid #666; border-radius: 3px; position: relative; flex: none; margin-right: 7px; }
.mn::after { content: ""; position: absolute; left: 3px; top: 6px; width: 7px; height: 1px; background: #444; }
.l1 { padding-left: 3px; }
.l2 { padding-left: 15px; }
.l3 { padding-left: 50px; position: relative; background: linear-gradient(#e2e2e2, #e2e2e2) 23px 0 / 1px 100% no-repeat; }
.l3::before { content: ""; position: absolute; left: 24px; top: 13px; width: 20px; height: 1px; background: #dcdcdc; }

.status { height: 38px; flex: none; background: #dcdcde; border-bottom: 1px solid #fff; display: flex; align-items: center; color: #555; padding-left: 3px; position: relative; }
.st-xyz { width: 328px; flex: none; letter-spacing: .2px; }
.st-a { width: 104px; flex: none; }
.st-b { width: 166px; flex: none; }
.st-c { width: 129px; flex: none; }
.st-d { width: 129px; flex: none; }
.st-tools { display: flex; gap: 4px; align-items: center; flex: none; margin-top: -1px; }
.sb { height: 31px; background: #cfcfcf; border: 2px solid #b4b4b4; display: flex; align-items: center; justify-content: center; color: #666; position: relative; white-space: nowrap; font-size: 15px; }
.s1, .s3 { width: 31px; }
.s2 { width: 45px; justify-content: flex-start; padding-left: 1px; }
.s3 { margin-left: 3px; }
.s6 { width: 91px; }
.s7 { width: 76px; }
.on { background: #fff; border-color: #62b0ff; }
.dis { background: #cdcdcd; }
.sc { width: 0; height: 0; position: absolute; right: 4px; top: 12px; border: 3.5px solid transparent; border-top: 4px solid #666; border-bottom: 0; }

.taskbar { height: 37px; flex: none; background: linear-gradient(90deg, #14232b, #182228 50%, #161d21); display: flex; overflow: hidden; }
.tslot { width: 61.9px; height: 37px; flex: none; display: flex; justify-content: center; align-items: flex-start; padding-top: 10px; position: relative; }
.sel { background: #454d52; }
.t-wps { width: 27px; height: 30px; border-radius: 3px; background: #2d7fe6; color: #fff; font-family: "Liberation Sans", sans-serif; font-weight: 700; font-size: 16px; line-height: 28px; text-align: center; }
.t-ie span { color: #2f9be8; font-family: "Liberation Serif", serif; font-size: 40px; line-height: 24px; font-weight: 700; }
.t-orbit { position: absolute; left: 17px; top: 10px; }
.t-coin { width: 30px; height: 34px; border-radius: 50%; background: #fff; border: 3px solid #c9971f; color: #b68315; font-size: 22px; font-weight: 700; line-height: 26px; text-align: center; }
.t-t { width: 29px; height: 34px; border-radius: 5px; background: #3b9df0; color: #fff; font-family: "Liberation Sans", sans-serif; font-weight: 700; font-size: 26px; line-height: 30px; text-align: center; }
.tray { margin-left: auto; width: 330px; flex: none; display: flex; align-items: flex-start; padding-top: 12px; }
.tray > * { flex: none; }
.tr-plug { margin: 2px 0 0 26px; }
.tr-bat { width: 44px; height: 22px; margin: 2px 0 0 1px; background: #1f9a4f; border: 3px solid #fff; color: #fff; font-size: 12px; line-height: 16px; text-align: center; }
.tr-person { margin: 1px 0 0 24px; }
.tr-chev { margin: 8px 0 0 27px; }
.tr-usb { margin: 4px 0 0 13px; }
.tr-qq { margin: 2px 0 0 14px; }
.tr-small { margin: 6px 0 0 10px; }
.tr-wifi { margin: 6px 0 0 14px; }
.tr-end { width: 8px; height: 12px; margin: 8px 0 0 8px; border: 1px solid #fff; }

.dlg {
  position: absolute;
  left: 23px;
  top: 0;
  width: 939px;
  height: 972px;
  background: #f0f0f0;
  border: 1px solid #c4cfdc;
  border-top: 0;
}
.dlg-title { height: 33px; margin: 0 -1px; background: #2b7de1; color: #dbe8f8; display: flex; align-items: center; justify-content: space-between; padding: 0 11px 0 10px; }
.dlg-ctl { display: flex; gap: 23px; }
.dlg-body { padding: 0 12px; }
.top-row { display: grid; grid-template-columns: 249px 1fr; gap: 8px; margin-top: 12px; }
.grp { margin: 0; padding: 0 9px 0 10px; border: 2px solid #e8e8e8; min-width: 0; }
.grp legend { margin-left: 0; padding: 0 0 4px; line-height: 16px; color: #2a2a2a; height: 20px; }
.grp-type { margin-top: 2px; padding-top: 15px; padding-bottom: 12px; }
.radios { display: flex; align-items: center; height: 20px; }
.radio { width: 15px; height: 15px; border-radius: 50%; border: 1px solid #c4c4c4; background: #f6f6f6; flex: none; position: relative; margin-right: 8px; }
.radio.on::after { content: ""; position: absolute; left: 3px; top: 3px; width: 7px; height: 7px; border-radius: 50%; background: #c0c0c0; }
.rad-lab { width: 94px; flex: none; }
.combos { display: flex; flex-direction: column; gap: 8px; }
.fld { display: flex; align-items: center; height: 32px; }
.fld label { width: 108px; flex: none; }
.combo { flex: 1; height: 32px; margin-right: -1px; background: #fff; border: 2px solid #dcdcdc; border-bottom-color: #bdbdbd; border-right-color: #c9c9c9; display: flex; align-items: center; justify-content: space-between; padding: 0 4px 0 3px; }
.caret { width: 0; height: 0; border: 3.5px solid transparent; border-top: 4px solid #555; border-bottom: 0; flex: none; }
.grp-calc { margin-top: 10px; padding-top: 12px; padding-bottom: 10px; }
.formula { height: 213px; background: #fff; border: 2px solid #9a9a9a; padding: 4px 4px; line-height: 21.3px; color: #222; white-space: nowrap; letter-spacing: .18px; }
.formula b { font-weight: 700; letter-spacing: 0; }
.grp-man { margin-top: 11px; padding-top: 12px; padding-bottom: 10px; }
.man-box { height: 61px; background: #fff; border: 2px solid #9a9a9a; }
.man-row { display: flex; align-items: center; margin-top: 9px; }
.btn { height: 30px; border: 2px solid #d4d4d4; background: #f0f0f0; display: flex; align-items: center; justify-content: center; color: #2a2a2a; flex: none; }
.btn-re { width: 125px; }
.man-lab { margin-left: 32px; width: 108px; flex: none; }
.man-res { flex: 1; height: 25px; background: #f9f0e6; border: 1px solid #ecebe8; }
.btn-row { display: flex; gap: 8.5px; margin-top: 9px; }
.btn-w { width: 174px; height: 31px; }
.view-row { display: flex; gap: 6px; margin: 31px 0 0 3px; height: 348px; }
.tree-pane { width: 251px; flex: none; background: #fff; border: 2px solid #d9dde1; display: flex; flex-direction: column; }
.view-pane { flex: 1; min-width: 0; display: flex; flex-direction: column; background: #fff; border-top: 2px solid #d9dde1; margin-right: 1px; }
.pane-tools { height: 31px; flex: none; display: flex; align-items: center; gap: 3px; padding-left: 7px; background: #fff; border-bottom: 3px solid #d9dde1; color: #444; }
.view-tools { padding-left: 7px; border-bottom: 0; gap: 0; }
.pt { display: flex; align-items: center; gap: 5px; height: 28px; padding-right: 5px; flex: none; }
.tree-pane .pt { padding-right: 12px; }
.tree-pane .pt + .pt { margin-left: 4px; }
.view-tools .pt { padding-right: 6px; gap: 6px; }
.view-tools .pt:nth-child(1) { margin-right: 10px; }
.view-tools .pt:nth-child(2) { margin-right: 2px; }
.view-tools .pt:nth-child(3) { margin-right: 3px; }
.view-tools .pt:nth-child(4) { margin-right: 3px; }
.view-tools .pt:nth-child(5) { margin-right: 9px; }
.view-tools .pt:nth-child(6) { margin-right: 10px; }
.view-tools .pt .caret { margin-left: 6px; margin-right: 0; }
.mini { display: block; flex: none; }
.tree { flex: 1; padding-top: 4px; }
.tr { display: flex; align-items: center; height: 30px; white-space: nowrap; }
.t0 { padding-left: 9px; }
.t1 { padding-left: 34px; }
.t2 { padding-left: 59px; }
.arr { width: 14px; height: 10px; flex: none; position: relative; }
.arr.down::before { content: ""; position: absolute; left: 0; top: 1px; border-style: solid; border-width: 0 0 7px 7px; border-color: transparent transparent #555 transparent; }
.arr.right::before { content: ""; position: absolute; left: 1px; top: 0; border-style: solid; border-width: 5px 0 5px 6px; border-color: transparent transparent transparent #999; }
.node { flex: 1; display: flex; align-items: center; gap: 9px; padding-left: 8px; height: 26px; min-width: 0; }
.sel.node { background: #c5d6ee; }
.hidden-defs { position: absolute; }
.grip { position: absolute; right: 1px; bottom: 1px; }
.pointer { position: absolute; left: 317px; top: 165px; }
```
